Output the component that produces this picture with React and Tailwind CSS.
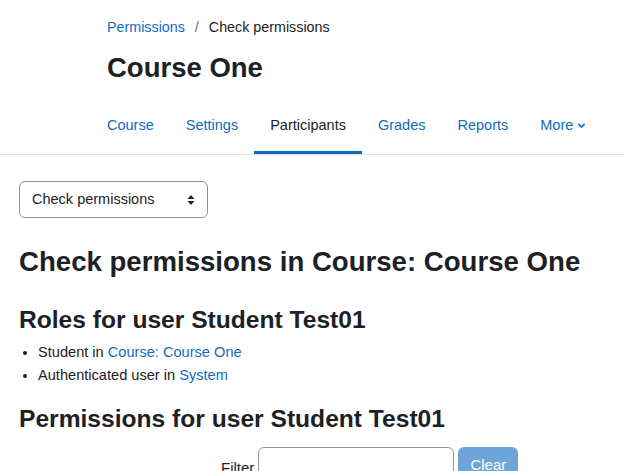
import React from "react";

const tabs = ["Course", "Settings", "Participants", "Grades", "Reports"];

export default function App() {
  return (
    <div
      className="min-h-screen bg-white text-[#1d2125] text-[15px] overflow-hidden"
      style={{ fontFamily: '"Liberation Sans", Arial, sans-serif' }}
    >
      {/* En-tête du cours */}
      <div className="pl-[107px] pt-[17px]">
        <nav className="flex items-center h-[22px] text-[14.3px]">
          <a className="text-[#0f6cbf]">Permissions</a>
          <span className="mx-[10px] text-[#6a737b]">/</span>
          <span>Check permissions</span>
        </nav>
        <h1 className="mt-[12px] text-[27.5px] font-bold leading-[34px]">Course One</h1>
      </div>

      {/* Onglets */}
      <div className="mt-[16px] border-b border-[#dee2e6] pl-[91px] flex text-[14.5px]">
        {tabs.map((t) => (
          <div
            key={t}
            className={
              "px-[16px] h-[53px] pb-[4px] flex items-center " +
              (t === "Participants"
                ? "text-[#1d2125] border-b-[3px] border-[#0f6cbf] pt-[3px] -mb-px"
                : "text-[#0f6cbf]")
            }
          >
            {t}
          </div>
        ))}
        <div className="px-[16px] h-[53px] pb-[4px] flex items-center text-[#0f6cbf] gap-[4px]">
          More
          <svg width="9" height="9" viewBox="0 0 10 10">
            <path d="M1.5 3.2 L5 6.7 L8.5 3.2" fill="none" stroke="#0f6cbf" strokeWidth="1.8" />
          </svg>
        </div>
      </div>

      {/* Contenu */}
      <div className="px-[19px] pt-[26px]">
        <div className="w-[189px] h-[37px] border border-[#8f959e] rounded-[6px] flex items-center justify-between pl-[12px] pr-[12px] text-[14.5px]">
          <span>Check permissions</span>
          <svg width="8" height="12" viewBox="0 0 8 12">
            <path d="M4 1 L7.5 5 H0.5 Z M4 11 L7.5 7 H0.5 Z" fill="#1d2125" />
          </svg>
        </div>

        <h2 className="mt-[26px] text-[27.6px] font-bold leading-[36px]">
          Check permissions in Course: Course One
        </h2>

        <h3 className="mt-[26px] text-[24.6px] font-bold leading-[28px]">Roles for user Student Test01</h3>
        <ul className="mt-[7px] pl-[19px] list-disc text-[14.6px] leading-[23px]">
          <li>
            Student in <a className="text-[#0f6cbf]">Course: Course One</a>
          </li>
          <li>
            Authenticated user in <a className="text-[#0f6cbf]">System</a>
          </li>
        </ul>

        <h3 className="mt-[18px] text-[24.6px] font-bold leading-[28px]">
          Permissions for user Student Test01
        </h3>

        <div className="mt-[14px] flex items-start">
          <span className="ml-[202px] mt-[10px] mr-[4px]">Filter</span>
          <div className="w-[196px] h-[36px] border border-[#8f959e] rounded-[6px]" />
          <button className="ml-[4px] h-[36px] w-[60px] rounded-[6px] bg-[#6ea6d9] text-white">
            Clear
          </button>
        </div>
      </div>
    </div>
  );
}
